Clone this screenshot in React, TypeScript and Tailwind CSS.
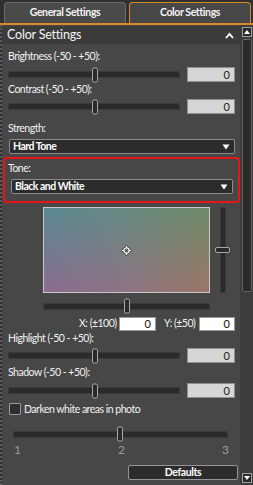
import React from "react";

function Track({ w, left }: { w: string; left: number }) {
  return (
    <div className={`relative ${w} h-[7px] bg-[#2b2b2b] border border-[#3a3a3a] rounded-[1px]`}>
      <div className="absolute top-1/2 -translate-y-1/2 w-[6px] h-[15px] rounded-[2px] bg-[#2a2a2a] border border-[#a8a8a8]" style={{ left }} />
    </div>
  );
}

function SliderRow() {
  return (
    <div className="flex items-center h-[15px] pl-[6px] pr-[5px]">
      <Track w="w-[172px]" left={83} />
      <div className="ml-auto w-[48px] h-[15px] bg-[#d6d6d6] border border-[#8f8f8f] text-[#1a1a1a] text-[11px] leading-[13px] text-right pr-[4px]">0</div>
    </div>
  );
}

function Label({ children, className = "" }: { children: React.ReactNode; className?: string }) {
  return <div className={`h-[14px] leading-[14px] text-[10.5px] tracking-[-0.5px] text-[#f2f2f2] pl-[6px] whitespace-nowrap ${className}`}>{children}</div>;
}

function Select({ text }: { text: string }) {
  return (
    <div className="flex items-center h-[15px] ml-[7px] mr-[5px] bg-[#2c2c2c] border border-[#8c8c8c] rounded-[2px] pl-[3px] pr-[4px]">
      <span className="text-[10.5px] leading-[13px] font-bold tracking-[-0.5px] text-white">{text}</span>
      <svg className="ml-auto" width="8" height="6" viewBox="0 0 8 6">
        <path d="M0.5 0.5 H7.5 L4 5.5 Z" fill="#ffffff" />
      </svg>
    </div>
  );
}

export default function App() {
  return (
    <div className="w-[253px] h-[485px] flex flex-col bg-[#2f2f2f] overflow-hidden [font-family:Lato,sans-serif] text-white">
      {/* tabs */}
      <div className="h-[25px] shrink-0 flex items-end gap-[3px] pl-[4px] pr-[2px] border-b-2 border-[#d98b2b] bg-[#303030]">
        <div className="w-[122px] h-[21px] rounded-t-[4px] bg-[#4a4a4a] border border-b-0 border-[#6c6c6c] flex items-center justify-center text-[10.5px] font-bold tracking-[-0.4px] text-[#f4f4f4]">
          General Settings
        </div>
        <div className="w-[122px] h-[21px] rounded-t-[4px] bg-[#474747] border-[1.5px] border-b-0 border-[#d98b2b] flex items-center justify-center text-[10.5px] font-bold tracking-[-0.4px] text-[#f4f4f4]">
          Color Settings
        </div>
      </div>

      <div className="flex-1 flex border-l-2 border-dotted border-[#5a5a5a]">
        {/* content column */}
        <div className="w-[238px] pt-[1px] flex flex-col bg-[#474747]">
          <div className="h-[18px] bg-[#3b3b3b] flex items-center pl-[5px] pr-[6px]">
            <span className="text-[12.5px] leading-[16px] tracking-[-0.2px] text-[#f4f4f4]">Color Settings</span>
            <svg className="ml-auto" width="9" height="7" viewBox="0 0 9 7">
              <path d="M1 6 L4.5 1.8 L8 6" stroke="#ffffff" strokeWidth="1.8" fill="none" />
            </svg>
          </div>

          <Label className="mt-[5px]">Brightness (-50 - +50):</Label>
          <div className="mt-[4px]"><SliderRow /></div>
          <Label>Contrast (-50 - +50):</Label>
          <div className="mt-[3px]"><SliderRow /></div>
          <Label className="mt-[7px]">Strength:</Label>
          <div className="mt-[4px]"><Select text="Hard Tone" /></div>

          <div className="mt-[3px] ml-[1px] w-[237px] h-[46px] border-2 border-[#e8141c] rounded-[4px] flex flex-col">
            <div className="h-[14px] leading-[14px] text-[10.5px] tracking-[-0.5px] text-[#f2f2f2] pl-[3px] mt-[2px]">Tone:</div>
            <div className="mt-[4px] -ml-[1px]"><Select text="Black and White" /></div>
          </div>

          {/* color picker */}
          <div className="mt-[4px] flex items-start pl-[41px]">
            <div className="relative w-[167px] h-[86px] border border-[#c8c8c8] bg-[linear-gradient(to_right,#5b8a93,#688a82_50%,#708c6a)]">
              <div className="absolute inset-0 bg-[linear-gradient(to_right,#8a6c8e,#8e7484_50%,#9c7668)] [mask-image:linear-gradient(to_bottom,transparent,black)]" />
              <svg className="absolute left-[77px] top-[37px]" width="11" height="11" viewBox="0 0 11 11">
                <path d="M5.5 0.5 V3 M5.5 8 V10.5 M0.5 5.5 H3 M8 5.5 H10.5" stroke="#333" strokeWidth="2.2" />
                <circle cx="5.5" cy="5.5" r="2.6" fill="none" stroke="#333" strokeWidth="2.6" />
                <path d="M5.5 1 V3 M5.5 8 V10 M1 5.5 H3 M8 5.5 H10" stroke="#fff" strokeWidth="1.2" />
                <circle cx="5.5" cy="5.5" r="2.6" fill="none" stroke="#fff" strokeWidth="1.3" />
              </svg>
            </div>
            <div className="relative ml-[5px] w-[15px] h-[86px] flex justify-center">
              <div className="w-[6px] h-full bg-[#2b2b2b] border border-[#3a3a3a]" />
              <div className="absolute left-0 top-[40px] w-[15px] h-[6px] rounded-[2px] bg-[#2a2a2a] border border-[#a8a8a8]" />
            </div>
          </div>

          <div className="mt-[6px] flex items-center h-[14px] pl-[41px]">
            <Track w="w-[167px]" left={80} />
          </div>

          <div className="mt-[4px] flex items-center h-[14px] text-[10.5px] tracking-[-0.5px] text-[#f2f2f2] whitespace-nowrap">
            <span className="ml-[77px] w-[39px]">X: (±100)</span>
            <div className="ml-[1px] w-[37px] h-[14px] bg-white border border-[#9a9a9a] text-[#111] text-[11px] tracking-normal leading-[12px] text-right pr-[4px]">0</div>
            <span className="ml-[8px] w-[35px]">Y: (±50)</span>
            <div className="w-[36px] h-[14px] bg-white border border-[#9a9a9a] text-[#111] text-[11px] tracking-normal leading-[12px] text-right pr-[4px]">0</div>
          </div>

          <Label>Highlight (-50 - +50):</Label>
          <div className="mt-[3px]"><SliderRow /></div>
          <Label className="mt-[2px]">Shadow (-50 - +50):</Label>
          <div className="mt-[4px]"><SliderRow /></div>

          <div className="mt-[5px] flex items-center h-[12px] pl-[7px]">
            <div className="w-[12px] h-[12px] bg-[#2e2e2e] border border-[#9a9a9a] rounded-[1px]" />
            <span className="ml-[3px] text-[10.5px] tracking-[-0.5px] leading-[12px] text-[#f2f2f2]">Darken white areas in photo</span>
          </div>

          <div className="mt-[12px] flex items-center h-[14px] pl-[11px]">
            <Track w="w-[215px]" left={103} />
          </div>
          <div className="mt-[3px] flex h-[12px] pl-[12px] pr-[11px] justify-between text-[12px] leading-[12px] text-[#9a9a9a]">
            <span>1</span>
            <span>2</span>
            <span>3</span>
          </div>

          <div className="mt-[9px] ml-[126px] w-[110px] h-[15px] bg-[#2c2c2c] border border-[#959595] rounded-[2px] flex items-center justify-center text-[10.5px] font-bold tracking-[-0.4px] text-white leading-[13px]">
            Defaults
          </div>
        </div>

        {/* scrollbar */}
        <div className="flex-1 bg-[#3c3c3c] flex flex-col items-center pt-[2px] pb-[2px]">
          <div className="w-[10px] h-[10px] bg-[#2a2a2a] border border-[#a0a0a0] flex items-center justify-center">
            <svg width="6" height="4" viewBox="0 0 6 4"><path d="M0 4 L3 0 L6 4 Z" fill="#fff" /></svg>
          </div>
          <div className="mt-[2px] w-[10px] h-[253px] rounded-[2px] bg-[#2a2a2a] border border-[#626262]" />
          <div className="mt-auto w-[10px] h-[10px] bg-[#2a2a2a] border border-[#a0a0a0] flex items-center justify-center">
            <svg width="6" height="4" viewBox="0 0 6 4"><path d="M0 0 L6 0 L3 4 Z" fill="#fff" /></svg>
          </div>
        </div>
      </div>
    </div>
  );
}
